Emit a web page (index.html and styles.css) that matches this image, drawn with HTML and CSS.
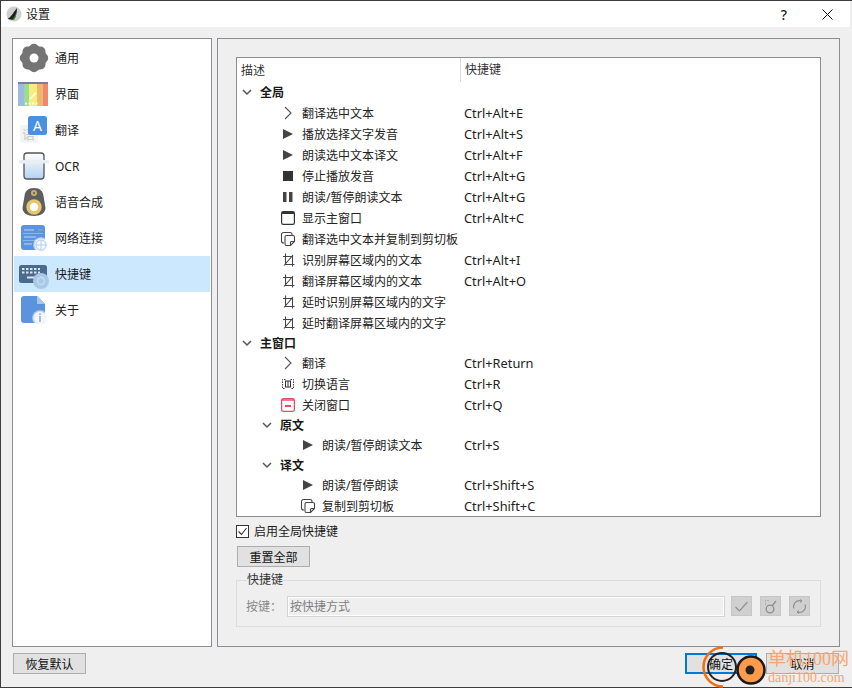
FILE: index.html
```html
<!DOCTYPE html>
<html>
<head>
  <title>设置</title>
  <link rel="stylesheet" href="styles.css">
</head>
<body>
  <svg class="defs" width="0" height="0">
    <defs>
      <symbol id="i-chev" viewBox="0 0 16 16"><path d="M5 2l6 6-6 6" fill="none" stroke="#555" stroke-width="1.1"/></symbol>
      <symbol id="i-play" viewBox="0 0 16 16"><path d="M3 3l10 5-10 5z" fill="#444"/></symbol>
      <symbol id="i-stop" viewBox="0 0 16 16"><rect x="3" y="3" width="10" height="10" fill="#333"/></symbol>
      <symbol id="i-pause" viewBox="0 0 16 16"><rect x="3" y="3" width="3.5" height="10" fill="#444"/><rect x="9" y="3" width="3.5" height="10" fill="#444"/></symbol>
      <symbol id="i-win" viewBox="0 0 16 16"><rect x="1.6" y="1.6" width="12.8" height="12.8" rx="1.6" fill="none" stroke="#333" stroke-width="1.2"/><path d="M2 3h12" stroke="#333" stroke-width="2"/></symbol>
      <symbol id="i-copy" viewBox="0 0 16 16"><path d="M4 12H3.500A2 2 0 0 1 1.500 10V3.500a2 2 0 0 1 2-2H10a2 2 0 0 1 2 2V4" fill="none" stroke="#444" stroke-width="1.1"/><path d="M6.500 4.500H13a1.500 1.500 0 0 1 1.500 1.500v4.500l-4 4H6.500A1.500 1.500 0 0 1 5 13V6a1.500 1.500 0 0 1 1.500-1.500zM14.500 10.500h-3a1 1 0 0 0-1 1v3" fill="none" stroke="#444" stroke-width="1.1"/></symbol>
      <symbol id="i-crop" viewBox="0 0 16 16"><path d="M5.500 1.500v11h9M3 4.500h9.500v10M4 13.500L13 3" fill="none" stroke="#444" stroke-width="1.1"/></symbol>
      <symbol id="i-swap" viewBox="0 0 16 16"><path d="M5.500 3.500h-3v9h3M10.500 3.500h3v9h-3" fill="none" stroke="#444" stroke-dasharray="1.500 1"/><rect x="5.500" y="5" width="5" height="6" fill="none" stroke="#333"/><path d="M8 5v6" stroke="#333"/></symbol>
      <symbol id="i-close" viewBox="0 0 16 16"><rect x="1.600" y="1.600" width="12.800" height="12.800" rx="1.800" fill="none" stroke="#e0506a" stroke-width="1.300"/><path d="M2 3h12" stroke="#e0506a" stroke-width="1.500"/><path d="M5 9h6" stroke="#e0506a" stroke-width="2"/></symbol>
      <symbol id="i-down" viewBox="0 0 12 12"><path d="M2 4l4 4 4-4" fill="none" stroke="#555" stroke-width="1.500"/></symbol>
      <linearGradient id="g-ocr" x1="0" y1="0" x2="0" y2="1"><stop offset="0" stop-color="#ffffff"/><stop offset="1" stop-color="#b5d2ef"/></linearGradient>
      <radialGradient id="g-fade"><stop offset="0" stop-color="#ffffff"/><stop offset="0.7" stop-color="#eef4fb"/><stop offset="1" stop-color="#ffffff" stop-opacity="0.3"/></radialGradient>
    </defs>
  </svg>

  <div class="window">
    <div class="titlebar">
      <svg class="app-icon" width="16" height="16" viewBox="0 0 16 16">
        <circle cx="8" cy="8" r="7.500" fill="#cfcfcf"/>
        <path d="M1.500 13C5 11 7 7 11 2c0 5-1 9-3.500 12z" fill="#1d1d1d"/>
        <path d="M6 14c2-2 3-5 4-7 0 3-.5 5-2 7z" fill="#2f8a35"/>
      </svg>
      <span class="title">设置</span>
      <span class="help">?</span>
      <svg class="close" width="11" height="11" viewBox="0 0 11 11"><path d="M.5.500l10 10M10.500.500l-10 10" stroke="#111" stroke-width="1"/></svg>
    </div>

    <div class="main">
      <div class="sidebar">
        <div class="nav-item">
          <svg class="nav-icon" viewBox="0 0 32 32"><g fill="#747474"><rect x="4.500" y="4.500" width="23" height="23" rx="5"/><rect x="4.500" y="4.500" width="23" height="23" rx="5" transform="rotate(45 16 16)"/></g><circle cx="16" cy="16" r="4.500" fill="#fff"/></svg>
          <span>通用</span>
        </div>
        <div class="nav-item">
          <svg class="nav-icon" viewBox="0 0 32 32"><rect x="0" y="4" width="6" height="24" fill="#9dbbe0"/><rect x="6" y="4" width="5" height="24" fill="#9bdc8f"/><rect x="11" y="4" width="8" height="24" fill="#f5ee7d"/><rect x="19" y="4" width="6" height="24" fill="#eeb96f"/><rect x="25" y="4" width="5" height="24" fill="#f0896a"/><rect x="0" y="4" width="30" height="2" fill="#7b7ba8"/><path d="M12 21l6-6" stroke="#fff" stroke-width="1.500"/><path d="M7 25.500h14" stroke="#fff" stroke-width="2" stroke-dasharray="2 1.500"/></svg>
          <span>界面</span>
        </div>
        <div class="nav-item">
          <svg class="nav-icon" viewBox="0 0 32 32"><rect x="2" y="11" width="18" height="18" rx="3" fill="#f4f4f4"/><text x="4" y="25" class="ghost-char">语</text><rect x="10" y="2" width="19" height="19" rx="2.500" fill="#4a90e2"/><text x="15" y="17" class="icon-letter">A</text></svg>
          <span>翻译</span>
        </div>
        <div class="nav-item">
          <svg class="nav-icon" viewBox="0 0 32 32"><rect x="6" y="3" width="20" height="26" rx="3" fill="url(#g-ocr)" stroke="#555" stroke-width="1.300"/><rect x="1" y="10" width="30" height="3.500" fill="#e9eef4"/></svg>
          <span>OCR</span>
        </div>
        <div class="nav-item">
          <svg class="nav-icon" viewBox="0 0 32 32"><path d="M16 2c6 0 9 3 9.500 8l2 12c0 5-5 8-11.500 8S4.500 27 4.500 22l2-12C7 5 10 2 16 2z" fill="#5e5e5e"/><circle cx="16" cy="7" r="3" fill="#c9b06b"/><circle cx="16" cy="7" r="1" fill="#555"/><circle cx="16" cy="21" r="6" fill="#fff" stroke="#e6c66d" stroke-width="3.500"/></svg>
          <span>语音合成</span>
        </div>
        <div class="nav-item">
          <svg class="nav-icon" viewBox="0 0 32 32"><rect x="3" y="3" width="24" height="25" rx="3" fill="#5b94dd"/><path d="M6 8h10M6 15h12M6 22h8" stroke="#bcd5f2"/><path d="M20 8h5M5 11.500h20M5 18.500h20" stroke="#8db5e8"/><circle cx="23" cy="23" r="8" fill="url(#g-fade)"/><circle cx="23" cy="23" r="5" fill="none" stroke="#b7cfee"/><path d="M18 23h10M23 18v10" stroke="#b7cfee"/></svg>
          <span>网络连接</span>
        </div>
        <div class="nav-item active">
          <svg class="nav-icon" viewBox="0 0 32 32"><rect x="1" y="7" width="28" height="18" rx="2.500" fill="#4a6a8e"/><path d="M4 11h18M4 14.500h18" stroke="#dbe6f2" stroke-width="2" stroke-dasharray="2.500 1.500"/><path d="M9 19.500h12" stroke="#dbe6f2" stroke-width="2"/><circle cx="23" cy="23" r="8" fill="#a9c8e6"/><circle cx="23" cy="23" r="3.500" fill="none" stroke="#c5dbf0" stroke-width="1.500"/></svg>
          <span>快捷键</span>
        </div>
        <div class="nav-item">
          <svg class="nav-icon" viewBox="0 0 32 32"><path d="M6 2h13l8 8v16a3 3 0 0 1-3 3H6a3 3 0 0 1-3-3V5a3 3 0 0 1 3-3z" fill="#5b94dd"/><path d="M19 2l8 8h-8z" fill="#a6c6ee"/><circle cx="22" cy="24" r="8" fill="url(#g-fade)"/><path d="M22 22v6M22 19.500v1.500" stroke="#7fa9dc" stroke-width="1.500"/></svg>
          <span>关于</span>
        </div>
      </div>

      <div class="panel">
        <div class="tree">
          <div class="tree-head">
            <div class="col-desc">描述</div>
            <div class="col-keys">快捷键</div>
          </div>

          <div class="row group short"><div class="desc"><svg class="arrow"><use href="#i-down"/></svg><b>全局</b></div></div>
          <div class="row"><div class="desc leaf"><svg class="ti"><use href="#i-chev"/></svg>翻译选中文本</div><div class="keys">Ctrl+Alt+E</div></div>
          <div class="row"><div class="desc leaf"><svg class="ti"><use href="#i-play"/></svg>播放选择文字发音</div><div class="keys">Ctrl+Alt+S</div></div>
          <div class="row"><div class="desc leaf"><svg class="ti"><use href="#i-play"/></svg>朗读选中文本译文</div><div class="keys">Ctrl+Alt+F</div></div>
          <div class="row"><div class="desc leaf"><svg class="ti"><use href="#i-stop"/></svg>停止播放发音</div><div class="keys">Ctrl+Alt+G</div></div>
          <div class="row"><div class="desc leaf"><svg class="ti"><use href="#i-pause"/></svg>朗读/暂停朗读文本</div><div class="keys">Ctrl+Alt+G</div></div>
          <div class="row"><div class="desc leaf"><svg class="ti"><use href="#i-win"/></svg>显示主窗口</div><div class="keys">Ctrl+Alt+C</div></div>
          <div class="row"><div class="desc leaf"><svg class="ti"><use href="#i-copy"/></svg>翻译选中文本并复制到剪切板</div></div>
          <div class="row"><div class="desc leaf"><svg class="ti"><use href="#i-crop"/></svg>识别屏幕区域内的文本</div><div class="keys">Ctrl+Alt+I</div></div>
          <div class="row"><div class="desc leaf"><svg class="ti"><use href="#i-crop"/></svg>翻译屏幕区域内的文本</div><div class="keys">Ctrl+Alt+O</div></div>
          <div class="row"><div class="desc leaf"><svg class="ti"><use href="#i-crop"/></svg>延时识别屏幕区域内的文字</div></div>
          <div class="row"><div class="desc leaf"><svg class="ti"><use href="#i-crop"/></svg>延时翻译屏幕区域内的文字</div></div>

          <div class="row group short"><div class="desc"><svg class="arrow"><use href="#i-down"/></svg><b>主窗口</b></div></div>
          <div class="row short"><div class="desc leaf"><svg class="ti"><use href="#i-chev"/></svg>翻译</div><div class="keys">Ctrl+Return</div></div>
          <div class="row"><div class="desc leaf"><svg class="ti"><use href="#i-swap"/></svg>切换语言</div><div class="keys">Ctrl+R</div></div>
          <div class="row"><div class="desc leaf"><svg class="ti"><use href="#i-close"/></svg>关闭窗口</div><div class="keys">Ctrl+Q</div></div>

          <div class="row group sub short"><div class="desc"><svg class="arrow"><use href="#i-down"/></svg><b>原文</b></div></div>
          <div class="row short"><div class="desc leaf deep"><svg class="ti"><use href="#i-play"/></svg>朗读/暂停朗读文本</div><div class="keys">Ctrl+S</div></div>
          <div class="row group sub short"><div class="desc"><svg class="arrow"><use href="#i-down"/></svg><b>译文</b></div></div>
          <div class="row short"><div class="desc leaf deep"><svg class="ti"><use href="#i-play"/></svg>朗读/暂停朗读</div><div class="keys">Ctrl+Shift+S</div></div>
          <div class="row"><div class="desc leaf deep"><svg class="ti"><use href="#i-copy"/></svg>复制到剪切板</div><div class="keys">Ctrl+Shift+C</div></div>
        </div>

        <label class="check-row">
          <span class="checkbox"><svg width="11" height="11" viewBox="0 0 11 11"><path d="M1.500 5.500l3 3 5-6.500" fill="none" stroke="#333" stroke-width="1.100"/></svg></span>
          启用全局快捷键
        </label>

        <button class="btn reset-btn">重置全部</button>

        <fieldset class="key-group">
          <legend>快捷键</legend>
          <div class="key-row">
            <span class="key-label">按键：</span>
            <input class="key-input" type="text" placeholder="按快捷方式" disabled>
            <span class="tool-btn"><svg width="15" height="15" viewBox="0 0 15 15"><path d="M1.500 8l4 4 8-9" fill="none" stroke="#8f8f8f" stroke-width="1.200"/></svg></span>
            <span class="tool-btn"><svg width="15" height="15" viewBox="0 0 15 15"><circle cx="7" cy="10" r="3.800" fill="none" stroke="#8f8f8f" stroke-width="1.300"/><path d="M9 7l4-5" stroke="#8f8f8f" stroke-width="1.300"/><path d="M2 2h1M5 1v1M2 5h1" stroke="#8f8f8f"/></svg></span>
            <span class="tool-btn"><svg width="15" height="15" viewBox="0 0 15 15"><path d="M2 9.500A5.800 5.800 0 0 1 9.500 2M13 5.500A5.800 5.800 0 0 1 5.500 13" fill="none" stroke="#8f8f8f" stroke-width="1.200"/><path d="M8 .500l2 1.500-2 1.500M7 11.500l-2 1.500 2 1.500" fill="none" stroke="#8f8f8f"/></svg></span>
          </div>
        </fieldset>
      </div>
    </div>

    <div class="footer">
      <button class="btn">恢复默认</button>
      <span class="spacer"></span>
      <button class="btn primary">确定</button>
      <button class="btn">取消</button>
    </div>
  </div>

  <!-- site watermark sits over the dialog buttons -->
  <div class="watermark">
    <svg class="wm-logo" width="67" height="42" viewBox="0 0 67 42">
      <path d="M23 1.500A19.500 19.500 0 0 0 23 40.500" fill="none" stroke="#f26d12" stroke-width="2.500"/>
      <circle cx="22" cy="21" r="14" fill="none" stroke="#222" stroke-width="2"/>
      <circle cx="51" cy="24" r="13.500" fill="#ff9a4d" stroke="#1a1a1a" stroke-width="2.500"/>
      <circle cx="50" cy="24" r="4.500" fill="#222"/>
    </svg>
    <div class="wm-text">
      <div class="wm-cn">单机100网</div>
      <div class="wm-en">danji100.com</div>
    </div>
  </div>
</body>
</html>
```

FILE: styles.css
```css
* {
  box-sizing: border-box;
}

html, body {
  margin: 0;
  height: 100%;
  overflow: hidden;
}

body {
  font-family: "Noto Sans", "Noto Sans CJK SC", sans-serif;
  font-size: 12px;
  color: #1a1a1a;
  position: relative;
}

.defs {
  position: absolute;
}

.window {
  height: 688px;
  display: flex;
  flex-direction: column;
  background: #efefef;
  border: 1px solid #3c3c3c;
  border-right: 0;
}

.titlebar {
  height: 26px;
  flex: none;
  display: flex;
  align-items: center;
  background: #fff;
  padding-left: 5px;
  padding-right: 17px;
  margin-right: 2px;
}

.title {
  margin-left: 4px;
  flex: 1;
}

.help {
  font-size: 14px;
  font-weight: 500;
  margin-right: 35px;
}

.main {
  display: flex;
  gap: 5px;
  padding: 11px 11px 0 11px;
}

.sidebar {
  width: 200px;
  height: 609px;
  flex: none;
  background: #fff;
  border: 1px solid #8a8d93;
  padding: 1px;
}

.nav-item {
  height: 36px;
  display: flex;
  align-items: center;
  gap: 5px;
  padding-left: 4px;
}

.nav-item.active {
  background: #cce8ff;
}

.nav-icon {
  width: 32px;
  height: 32px;
  flex: none;
}

.ghost-char {
  font-size: 13px;
  fill: #c9c9c9;
}

.icon-letter {
  font-size: 14px;
  fill: #fff;
}

.panel {
  width: 623px;
  flex: none;
  height: 609px;
  border: 1px solid #8a8d93;
  padding: 18px 18px 0 18px;
}

.tree {
  width: 585px;
  height: 460px;
  background: #fff;
  border: 1px solid #8a8d93;
  overflow: hidden;
}

.tree-head {
  height: 24px;
  display: flex;
  align-items: center;
  color: #333;
}

.col-desc {
  width: 224px;
  height: 100%;
  line-height: 26px;
  padding-left: 4px;
  border-right: 1px solid #dcdcdc;
}

.col-keys {
  padding-left: 4px;
  line-height: 26px;
}

.row {
  height: 21px;
  display: flex;
  align-items: center;
  white-space: nowrap;
}

.row.short {
  height: 20px;
}

.desc {
  width: 227px;
  flex: none;
  display: flex;
  align-items: center;
  padding-left: 4px;
}

.sub .desc {
  padding-left: 24px;
}

.desc.leaf {
  padding-left: 43px;
  color: #222;
}

.desc.deep {
  padding-left: 63px;
}

.keys {
  color: #222;
  font-size: 12.8px;
}

.arrow {
  width: 12px;
  height: 12px;
  margin-right: 7px;
}

.ti {
  width: 16px;
  height: 16px;
  margin-right: 6px;
  flex: none;
}

.check-row {
  display: flex;
  align-items: center;
  gap: 5px;
  margin-top: 7px;
  height: 14px;
}

.checkbox {
  width: 13px;
  height: 13px;
  border: 1px solid #333;
  background: #fff;
  display: flex;
  align-items: center;
  justify-content: center;
}

.btn {
  width: 73px;
  height: 21px;
  padding: 0;
  font: inherit;
  color: #111;
  background: #e1e1e1;
  border: 1px solid #adadad;
}

.btn.primary {
  width: 72px;
  border: 2px solid #0078d7;
  margin-right: 9px;
}

.reset-btn {
  display: block;
  margin: 8px 0 0 1px;
}

.key-group {
  width: 585px;
  height: 54px;
  margin: 6px 0 0 0;
  padding: 0 10px 0 9px;
  border: 1px solid #dcdcdc;
}

.key-group legend {
  padding: 0;
  margin-left: 1px;
  line-height: 14px;
  color: #333;
}

.key-row {
  display: flex;
  align-items: center;
  height: 20px;
  margin-top: 9px;
}

.key-label {
  width: 42px;
  color: #888;
}

.key-input {
  width: 436px;
  height: 19px;
  margin-right: 7px;
  padding: 0 1px;
  font: inherit;
  background: #efefef;
  border: 1px solid #fff;
  outline: 1px solid #d4d4d4;
}

.key-input::placeholder {
  color: #808080;
}

.tool-btn {
  width: 21px;
  height: 20px;
  margin-right: 8px;
  flex: none;
  display: flex;
  align-items: center;
  justify-content: center;
  background: #d0d0d0;
  border: 1px solid #c6c6c6;
}

.tool-btn:last-child {
  margin-right: 0;
}

.footer {
  display: flex;
  align-items: center;
  padding: 6px 13px 0 12px;
}

.spacer {
  flex: 1;
}

/* watermark */
.watermark {
  position: absolute;
  left: 700px;
  top: 646px;
  width: 152px;
  height: 42px;
  display: flex;
}

.wm-logo {
  flex: none;
}

.wm-text {
  margin-left: 1px;
  color: #f9a56e;
  font-family: "Liberation Serif", "Noto Sans CJK SC", serif;
}

.wm-cn {
  font-size: 18px;
  line-height: 22px;
  margin-top: 2px;
}

.wm-en {
  font-size: 14px;
  line-height: 15px;
}
```
